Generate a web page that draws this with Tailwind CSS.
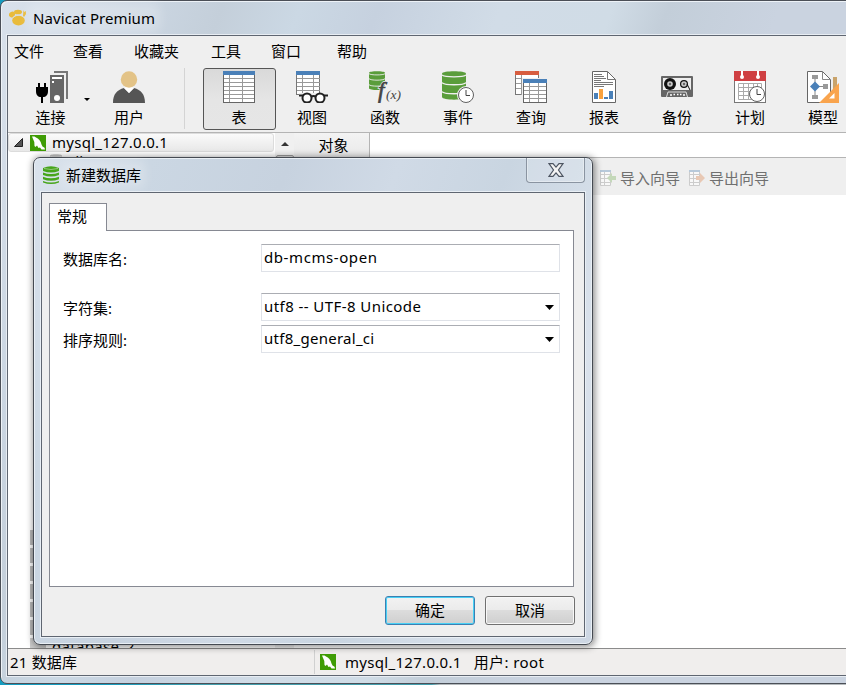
<!DOCTYPE html>
<html lang="zh-CN">
<head>
  <meta charset="UTF-8">
  <meta name="viewport" content="width=device-width, initial-scale=1.0">
  <title>Navicat Premium</title>
  <script src="https://cdn.jsdelivr.net/npm/@tailwindcss/browser@4"></script>
</head>
<body class="relative w-[846px] h-[685px] overflow-hidden bg-[linear-gradient(90deg,#159cc0_0%,#159cc0_12%,#459fae_25%,#459fae_51%,#b5babd_52%)] font-['Noto_Sans','Noto_Sans_CJK_SC',sans-serif] text-[15px] leading-5 text-black">

  <!-- Shared icons -->
  <svg class="hidden">
    <symbol id="mysql" viewBox="0 0 16 16">
      <rect width="16" height="16" fill="#3f9c05"/>
      <path d="M2 1.500h2.500l1.500 1C8.500 3.200 10.800 6 11.500 9.500l1 2 2 1.300.5 1.700h-3.500L10 12.500 8.500 13 7 10.500 5.500 12 4.500 11 4.300 7z" fill="#fff"/>
    </symbol>
    <symbol id="grid" viewBox="0 0 32 32">
      <rect x=".5" y=".5" width="31" height="31" fill="#fff" stroke="#666"/>
      <path d="M1 7.500h30M1 11.500h30M1 15.500h30M1 19.500h30M1 23.500h30M1 27.500h30M6.500 4v27M19.500 4v27" stroke="#999" fill="none"/>
      <rect width="32" height="4" fill="#4a80b8"/>
    </symbol>
    <symbol id="clock" viewBox="0 0 18 18">
      <circle cx="9" cy="9" r="9" fill="#efefef"/>
      <circle cx="9" cy="9" r="7.500" fill="#fff" stroke="#606060"/>
      <path d="M9 4v5.500h4" fill="none" stroke="#444"/>
    </symbol>
    <symbol id="drum" viewBox="0 0 24 30">
      <path d="M0 2.500C0-.5 24-.5 24 2.500V26c0 3.500-24 3.500-24 0z" fill="#5a9d3b"/>
      <path d="M0 4c2 2.500 22 2.500 24 0M0 11.500c2 3 22 3 24 0M0 20.500c2 3 22 3 24 0" fill="none" stroke="#efefef" stroke-width="1.300"/>
    </symbol>
  </svg>

  <!-- Main window -->
  <div class="flex h-[684px] w-[870px] flex-col rounded-tl-[7px] rounded-bl-[7px] border border-[#4b4f57] bg-[linear-gradient(110deg,#d9e1eb_0,#cbd6e2_13%,#c4cfda_20%,#cbd8e4_27%,#c6d1df_34%,#d1dce7_45%,#d0dce6_55%,#c3ced9_60%,#cad3e0_70%,#cad3e0_100%)] pb-[7px] pl-[6px] shadow-[inset_1px_1px_0_#edf2f7]">
    <header class="flex h-[34px] shrink-0 items-center gap-[6px] pl-[2px]">
      <svg class="size-[18px]" viewBox="0 0 18 18" fill="#e9bb3b">
        <ellipse cx="9.500" cy="11.500" rx="6.300" ry="5"/>
        <ellipse cx="3" cy="5.500" rx="3.200" ry="2.600" transform="rotate(-35 3 5.500)"/>
        <ellipse cx="9" cy="3" rx="4" ry="2.300"/>
        <path d="M14.500 1l.8 2 1.500-1 .2 3-2 3-1-1z"/>
        <path d="M4 8.500c2-2.500 8-3 10.500-.5" fill="none" stroke="#d9e1ea" stroke-width=".8"/>
      </svg>
      <span class="rounded bg-white/20 tracking-[.08px] shadow-[0_0_10px_6px_rgba(255,255,255,.2)]">Navicat Premium</span>
    </header>

    <div class="flex grow flex-col border border-[#5f6671] bg-[#efefef] shadow-[0_0_0_1px_#e8edf3]">
      <nav class="flex h-[31px] shrink-0 items-center pb-[2px] pl-[6px]">
        <span class="w-[59px]">文件</span>
        <span class="w-[61px]">查看</span>
        <span class="w-[77px]">收藏夹</span>
        <span class="w-[60px]">工具</span>
        <span class="w-[66px]">窗口</span>
        <span>帮助</span>
      </nav>

      <div class="flex h-[66px] shrink-0 items-start border-b border-[#b4b4b4] pt-px text-center *:shrink-0">
        <div class="flex w-[82px] flex-col items-center pt-[3px] pl-[3px]">
          <svg class="h-8 w-[34px]" viewBox="0 0 34 32">
            <path d="M20 0h14v28h-2V2H20z" fill="#777"/>
            <path d="M16 4h14v28H16z" fill="#666"/>
            <path d="M18 6h10v2H18zM18 10h2v2h-2z" fill="#fff"/>
            <circle cx="23" cy="27" r="3" fill="#fff"/>
            <path d="M4 12h2v4h4v-4h2v4h2v4c0 4-2 6-5 6v6H7v-6c-3 0-5-2-5-6v-4h2z"/>
          </svg>
          <span class="mt-[4px]">连接</span>
        </div>
        <div class="mt-[30px] -ml-[6px] h-0 w-[6px] border-x-[3px] border-t-[3px] border-x-transparent border-t-black"></div>
        <div class="flex w-[78px] flex-col items-center pt-[3px]">
          <svg class="size-8" viewBox="0 0 32 32">
            <path d="M0 32c0-9 4-13 11-15l5 5 5-5c7 2 11 6 11 15z" fill="#555"/>
            <path d="M11 17l5-2 5 2-5 5z" fill="#fff"/>
            <circle cx="16" cy="8.500" r="8.200" fill="#e3c387"/>
          </svg>
          <span class="mt-[4px]">用户</span>
        </div>
        <div class="ml-[16px] h-[61px] w-px bg-[#d4d4d4]"></div>
        <div class="ml-[18px] flex h-[62px] w-[73px] flex-col items-center rounded-[3px] border border-[#555] bg-linear-to-b from-[#d9d9d9] via-[#e5e5e5] to-[#e6e6e6] pt-[2px] pr-px">
          <svg class="size-8"><use href="#grid"/></svg>
          <span class="mt-[4px]">表</span>
        </div>
        <div class="flex w-[73px] flex-col items-center pt-[3px] pr-px">
          <svg class="size-8" viewBox="0 0 32 32">
            <rect x=".5" y=".5" width="23" height="23" fill="#fff" stroke="#777"/>
            <path d="M1 7.500h23M1 11.500h23M1 15.500h23M1 19.500h23M6.500 4v20M17.500 4v20" stroke="#999" fill="none"/>
            <rect width="24" height="4" fill="#4a80b8"/>
            <path d="M3 22h29v10H3z" fill="#efefef"/>
            <g fill="none" stroke="#222" stroke-width="2"><circle cx="11" cy="27" r="4.500" fill="#fff"/><circle cx="24" cy="27" r="4.500" fill="#fff"/><path d="M3 24.500h4M15 26q2.500-2 5 0M28 24.500h4"/></g>
          </svg>
          <span class="mt-[4px]">视图</span>
        </div>
        <div class="flex w-[73px] flex-col items-center pt-[3px] pr-px">
          <svg class="size-8" viewBox="0 0 32 32">
            <svg width="16" height="20" viewBox="0 0 24 30" preserveAspectRatio="none"><use href="#drum" width="24" height="30"/></svg>
            <text x="9" y="26.500" font-family="Liberation Serif" font-size="23" font-style="italic" fill="#444" stroke="#efefef" stroke-width="2" paint-order="stroke">f</text>
            <text x="9" y="26.500" font-family="Liberation Serif" font-size="23" font-style="italic" fill="none" stroke="#444" stroke-width=".7" aria-hidden="true">f</text>
            <text x="17" y="28" font-family="Liberation Serif" font-size="13" font-style="italic" fill="#444" textLength="15" lengthAdjust="spacingAndGlyphs">(x)</text>
          </svg>
          <span class="mt-[4px]">函数</span>
        </div>
        <div class="flex w-[73px] flex-col items-center pt-[3px] pr-px">
          <svg class="size-8" viewBox="0 0 32 32">
            <use href="#drum" width="24" height="30"/>
            <use href="#clock" x="15" y="15" width="18" height="18"/>
          </svg>
          <span class="mt-[4px]">事件</span>
        </div>
        <div class="flex w-[73px] flex-col items-center pt-[3px] pr-px">
          <svg class="size-8" viewBox="0 0 32 32">
            <rect x=".5" y=".5" width="23" height="23" fill="#fff" stroke="#777"/>
            <path d="M1 7.500h23M1 12.500h23M1 17.500h23M6.500 4v20" stroke="#999" fill="none"/>
            <rect width="24" height="4" fill="#d75d3f"/>
            <rect x="7" y="7" width="25" height="25" fill="#efefef"/>
            <rect x="8.500" y="8.500" width="23" height="23" fill="#fff" stroke="#666"/>
            <path d="M9 15.500h22M9 19.500h22M9 23.500h22M9 27.500h22M14.500 12v19M23.500 12v19" stroke="#999" fill="none"/>
            <rect x="8" y="8" width="24" height="4" fill="#4a80b8"/>
          </svg>
          <span class="mt-[4px]">查询</span>
        </div>
        <div class="flex w-[73px] flex-col items-center pt-[3px] pr-px">
          <svg class="size-8" viewBox="0 0 32 32">
            <path d="M4.500.5h15l8 8v23h-23z" fill="#fff" stroke="#666"/>
            <path d="M19.500.5v8h8" fill="none" stroke="#777"/>
            <path d="M6 3.500h8M6 5.500h10M6 7.500h12M6 9.500h7M6 11.500h19M6 13.500h19M6 15.500h10" stroke="#777"/>
            <path d="M6 22h4v6H6zM16 26h4v2h-4zM21 20h4v8h-4z" fill="#4a80b8"/>
            <path d="M11 18h4v10h-4z" fill="#f9a13d"/>
          </svg>
          <span class="mt-[4px]">报表</span>
        </div>
        <div class="flex w-[73px] flex-col items-center pt-[3px] pr-px">
          <svg class="size-8" viewBox="0 0 32 32">
            <rect y="5" width="32" height="21" rx="1" fill="#666"/>
            <rect x="2" y="7" width="28" height="12" fill="#eee"/>
            <circle cx="9" cy="13" r="6" fill="#111"/><circle cx="9" cy="13" r="2.800" fill="#ccc"/><circle cx="9" cy="13" r="1.200" fill="#666"/>
            <circle cx="23" cy="13" r="4" fill="#111"/><circle cx="23" cy="13" r="2.800" fill="#ccc"/><circle cx="23" cy="13" r="1.200" fill="#666"/>
            <path d="M26 13l3 6" stroke="#111"/>
            <path d="M5.500 26l1.500-5h18l1.500 5" fill="#666" stroke="#ddd"/>
            <path d="M9 24h2M12.500 23.500h1.500M16 23.500h1.500M19 23.500h1.500M22 24h2" stroke="#fff" stroke-width="1.500"/>
          </svg>
          <span class="mt-[4px]">备份</span>
        </div>
        <div class="flex w-[73px] flex-col items-center pt-[3px] pr-px">
          <svg class="size-8" viewBox="0 0 32 32">
            <rect x=".5" y=".5" width="31" height="31" fill="#fff" stroke="#777"/>
            <rect width="32" height="10" fill="#cf3f42"/>
            <path d="M8 0v6M24 0v6" stroke="#fff" stroke-width="2"/>
            <circle cx="8" cy="6" r="2" fill="#fff"/><circle cx="24" cy="6" r="2" fill="#fff"/>
            <path d="M4.500 12.500h23v16h-23zM4.500 16.500h23M4.500 20.500h23M4.500 24.500h23M9.500 12v17M14.500 12v17M19.500 12v17M23.500 12v17" fill="none" stroke="#aaa"/>
            <circle cx="23" cy="23" r="7.500" fill="#fff" stroke="#606060"/>
            <path d="M23 18v5.500h4" fill="none" stroke="#444"/>
          </svg>
          <span class="mt-[4px]">计划</span>
        </div>
        <div class="flex w-[73px] flex-col items-center pt-[3px] pr-px">
          <svg class="size-8" viewBox="0 0 32 32">
            <path d="M.5.500h15l8 8v23H.5z" fill="#fff" stroke="#666"/>
            <path d="M15.500.5v8h8M8 6v20M8 15.500h10" fill="none" stroke="#888"/>
            <path d="M5 4h6v4H5zM5 24h6v4H5zM16 13h5v5h-5z" fill="#999"/>
            <path d="M8 10.500l5 5-5 5-5-5z" fill="#4a80b8"/>
            <path d="M26 6h4v13h-4z" fill="#c9a36b"/>
            <path d="M32 12v20H12z" fill="#f9a44d"/><path d="M27.500 22v5.500H22z" fill="#fff"/>
          </svg>
          <span class="mt-[4px]">模型</span>
        </div>
      </div>

      <div class="flex h-[515px] shrink-0">
        <!-- Connection tree -->
        <aside class="flex w-[267px] flex-col overflow-hidden bg-white *:shrink-0">
          <div class="flex h-[19px] w-[266px] items-center rounded-[3px] border border-[#dcdcdc] bg-linear-to-b from-[#fafafa] to-[#e8e8e8]">
            <svg class="ml-[5px] size-[9px]" viewBox="0 0 9 9"><path d="M8.500.5v8H.5z" fill="#555" stroke="#222"/></svg>
            <svg class="ml-[7px] size-4"><use href="#mysql"/></svg>
            <span class="ml-[6px] pb-[2px] tracking-[.27px]">mysql_127.0.0.1</span>
          </div>
          <div class="flex h-[18px] items-start pl-[42px]">
            <svg class="mt-[2px] h-[15px] w-[12px] grayscale opacity-50"><use href="#drum"/></svg>
            <span class="-mt-px ml-[8px]">db</span>
          </div>
          <div class="mt-[360px] flex flex-col gap-[3px] pl-[22px]">
            <div class="h-[15px] w-4 bg-[#bbb]"></div>
            <div class="h-[15px] w-4 bg-[#bbb]"></div>
            <div class="h-[15px] w-4 bg-[#bbb]"></div>
            <div class="h-[15px] w-4 bg-[#bbb]"></div>
            <div class="h-[15px] w-4 bg-[#bbb]"></div>
            <div class="h-[15px] w-4 bg-[#bbb]"></div>
          </div>
          <div class="flex items-start pl-[22px]">
            <div class="mt-[3px] h-[15px] w-4 bg-[#ccc]"></div>
            <span class="ml-[6px] pt-px tracking-[.3px]">database_2</span>
          </div>
        </aside>
        <div class="flex w-[19px] flex-col items-center bg-[#f0f0f0] pt-[9px]">
          <div class="h-0 w-0 border-x-4 border-b-4 border-x-transparent border-b-[#333]"></div>
          <div class="mt-[9px] h-[490px] w-[18px] rounded-[2px] border border-[#999] bg-[#dcdcdc]"></div>
        </div>
        <!-- Object pane -->
        <main class="flex grow flex-col bg-white">
          <div class="flex h-[25px] border-b border-[#b4b4b4]">
            <div class="flex w-[76px] items-center justify-center border-r border-[#b4b4b4] bg-linear-to-b from-[#f3f3f3] to-[#e9e9e9] pl-[4px]">对象</div>
          </div>
          <div class="flex h-[37px] items-center bg-[#efefef] pt-[3px] pl-[306px] text-[#707070]">
            <svg class="size-4" viewBox="0 0 16 16"><path d="M.5.500h10v15H.5zM0 4.500h11M0 8.500h11M0 12.500h11M4.500 0v16" fill="#f8f8f8" stroke="#ccc"/><path d="M0 0h11v2H0z" fill="#b7c9da"/><path d="M7 8l5-5v3h4v4h-4v3z" fill="#c4d8b9"/></svg>
            <span class="ml-[4px]">导入向导</span>
            <svg class="ml-[9px] size-4" viewBox="0 0 16 16"><path d="M.5.500h10v15H.5zM0 4.500h11M0 8.500h11M0 12.500h11M4.500 0v16" fill="#f8f8f8" stroke="#ccc"/><path d="M0 0h11v2H0z" fill="#b7c9da"/><path d="M16 8l-5-5v3H7v4h4v3z" fill="#e8c8b4"/></svg>
            <span class="ml-[4px]">导出向导</span>
          </div>
        </main>
      </div>

      <footer class="flex grow items-center border-t border-[#8b8b8b] bg-[#f0eeed]">
        <span class="w-[306px] pl-[2px] tracking-[.2px]">21 数据库</span>
        <div class="h-[24px] w-px bg-[#d0d0d0]"></div>
        <svg class="ml-[5px] size-4"><use href="#mysql"/></svg>
        <span class="ml-[9px] tracking-[.3px]">mysql_127.0.0.1</span>
        <span class="ml-[12px] tracking-[.4px]">用户: root</span>
      </footer>
    </div>
  </div>

  <!-- New database dialog -->
  <div class="absolute top-[157px] left-[33px] flex h-[488px] w-[560px] flex-col rounded-[7px] border border-[#454a52] bg-[linear-gradient(110deg,#dae2ec_0,#cbd7e3_16%,#c7d2df_35%,#d0dae6_50%,#c9d5e1_65%,#dae2ec_85%,#ccd6e3_100%)] px-[7px] pb-[7px] shadow-[inset_0_0_0_1px_#e9eff5,1px_1px_7px_1px_rgba(0,0,0,.45)]">
    <div class="flex h-[34px] shrink-0 items-start">
      <svg class="mt-[8px] ml-[2px] h-[18px] w-4" viewBox="0 0 16 18">
        <g fill="#46a51a"><path d="M0 2q8-3.500 16 0v3q-8 3-16 0zM0 6.500q8 3 16 0V9q-8 3-16 0zM0 10.700q8 3 16 0v2.500q-8 3-16 0zM0 15q8 3 16 0v1.500q-8 3-16 0z"/></g>
        <path d="M1 2.500q7 2 14 0" fill="none" stroke="#94c67b"/>
      </svg>
      <span class="mt-[7px] ml-[7px] rounded bg-white/20 shadow-[0_0_10px_5px_rgba(255,255,255,.2)]">新建数据库</span>
      <button class="ml-auto flex h-[25px] w-[59px] items-center justify-center rounded-b-[4px] border border-t-0 border-[#8a94a1] bg-white/15 shadow-[inset_0_0_0_1px_rgba(255,255,255,.35)]">
        <svg class="h-[14px] w-4" viewBox="0 0 16 14"><path d="M1 .7h4l3 3.500 3-3.500h4L10.500 7l4.500 6.300h-4L8 9.800l-3 3.500H1L5.500 7z" fill="#f4f4f4" stroke="#4d5562" stroke-width="1.200"/></svg>
      </button>
    </div>

    <div class="flex grow flex-col border border-[#5f6671] bg-[#efefef] px-[7px] pt-[10px] shadow-[0_0_0_1px_#e9eff5]">
      <div class="relative z-10 -mb-px flex h-[28px] w-[58px] shrink-0 justify-center border border-b-0 border-[#868992] bg-white pt-[2px] pr-[12px] whitespace-nowrap">常规</div>
      <div class="flex h-[357px] w-[525px] shrink-0 flex-col border border-[#868992] bg-white pt-[13px] pl-[13px]">
        <div class="flex h-[28px] items-center">
          <label class="w-[198px] pt-[2px]">数据库名:</label>
          <div class="flex h-[28px] w-[299px] items-center border border-[#dfe2e8] border-t-[#abadb3] pb-[2px] pl-[2px] tracking-[.58px]">db-mcms-open</div>
        </div>
        <div class="mt-[21px] flex h-[28px] items-center">
          <label class="w-[198px] pt-[2px]">字符集:</label>
          <div class="flex h-[28px] w-[299px] items-center justify-between border border-[#dfe2e8] border-t-[#abadb3] pr-[5px] pl-[2px]">
            <span class="pb-[2px] tracking-[.43px]">utf8 -- UTF-8 Unicode</span>
            <svg class="h-[5px] w-[9px]" viewBox="0 0 9 5"><path d="M0 0h9L4.500 5z"/></svg>
          </div>
        </div>
        <div class="mt-[4px] flex h-[28px] items-center">
          <label class="w-[198px] pt-[2px]">排序规则:</label>
          <div class="flex h-[28px] w-[299px] items-center justify-between border border-[#dfe2e8] border-t-[#abadb3] pr-[5px] pl-[2px]">
            <span class="pb-[2px] tracking-[.27px]">utf8_general_ci</span>
            <svg class="h-[5px] w-[9px]" viewBox="0 0 9 5"><path d="M0 0h9L4.500 5z"/></svg>
          </div>
        </div>
      </div>
      <div class="mt-[9px] mr-[2px] flex justify-end gap-[10px]">
        <button class="h-[29px] w-[90px] rounded-[3px] border border-[#3c7fb1] bg-[linear-gradient(#f2f2f2_0,#ebebeb_48%,#dcdcdc_50%,#cfcfcf_100%)] pb-[2px] shadow-[inset_0_0_0_1px_#48d0f5]">确定</button>
        <button class="h-[29px] w-[90px] rounded-[3px] border border-[#707070] bg-[linear-gradient(#f2f2f2_0,#ebebeb_48%,#dcdcdc_50%,#cfcfcf_100%)] pb-[2px] shadow-[inset_0_0_0_1px_#f8f8f8]">取消</button>
      </div>
    </div>
  </div>
</body>
</html>
